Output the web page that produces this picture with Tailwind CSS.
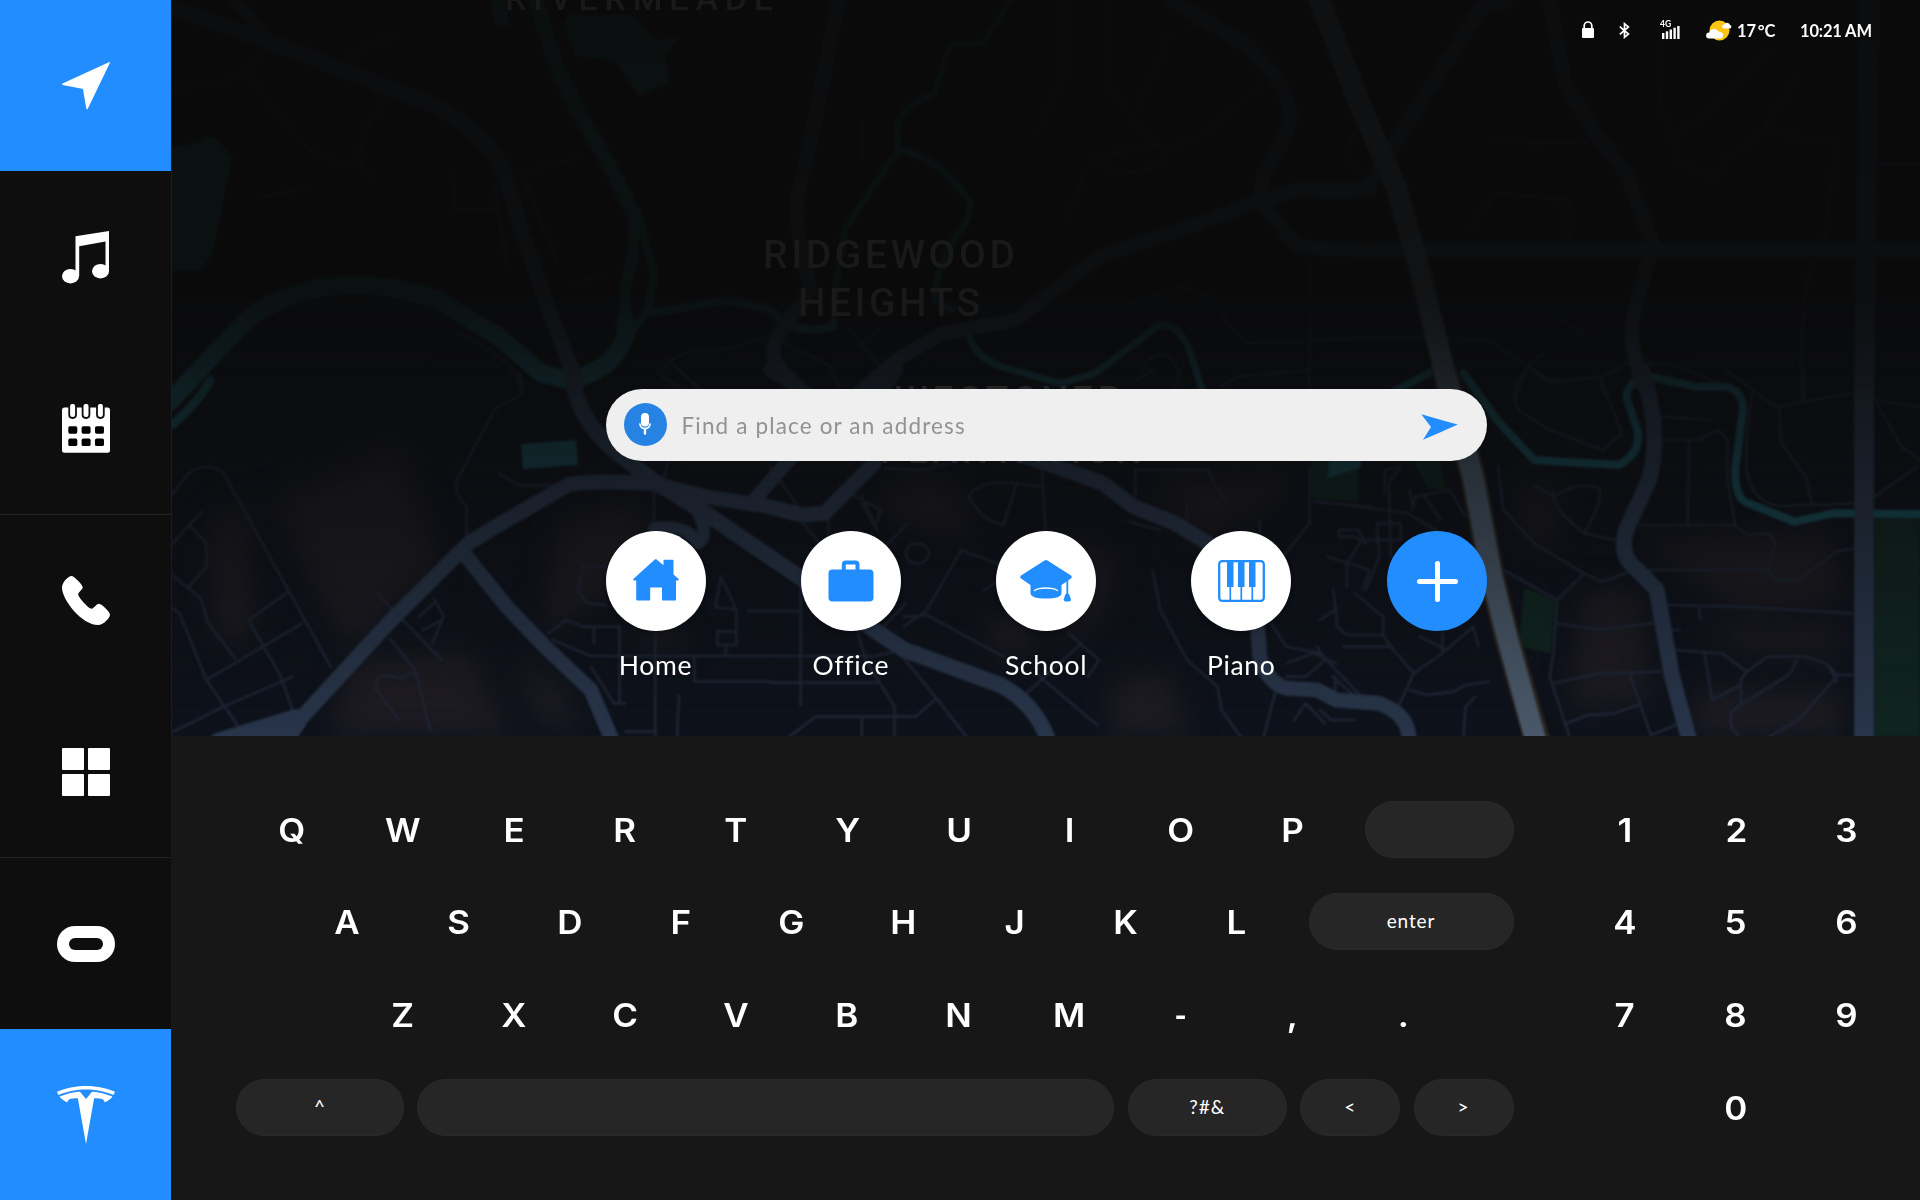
<!DOCTYPE html>
<html lang="en">
<head>
<meta charset="utf-8">
<title>Navigation</title>
<script src="https://cdn.jsdelivr.net/npm/@tailwindcss/browser@4"></script>
</head>
<body class="bg-[#171717] text-white overflow-hidden font-['Lato',sans-serif]">
<div class="flex w-[1920px] h-[1200px] overflow-hidden">

  <!-- Sidebar -->
  <nav class="grid grid-rows-7 w-[171px] h-full shrink-0 bg-[#0e0e0e]">
    <a class="flex items-center justify-center bg-[#228dff]">
      <svg class="w-12 h-12" viewBox="0 0 48 48" fill="#fff" stroke="#fff" stroke-linejoin="round" stroke-width="1.4"><path d="M47.2.8 25 46.6 21.6 26.4.8 22.2Z"/></svg>
    </a>
    <a class="flex items-center justify-center">
      <svg class="w-12 h-[53px]" viewBox="0 0 48 53" fill="#fff"><path d="M13.5 5.2 47 0V40H43.5V10.6L17.2 15.2V45H13.5Z"/><ellipse cx="8.5" cy="45.2" rx="8.5" ry="7.3"/><ellipse cx="38.5" cy="40.2" rx="8.5" ry="7.3"/></svg>
    </a>
    <a class="flex items-center justify-center">
      <svg class="w-12 h-[49px]" viewBox="0 0 48 49"><rect y="3.5" width="48" height="45.3" rx="2.5" fill="#fff"/><g fill="#fff" stroke="#0e0e0e" stroke-width="1.8"><rect x="7.2" y="-1" width="6.8" height="15" rx="3.2"/><rect x="20.6" y="-1" width="6.8" height="15" rx="3.2"/><rect x="35" y="-1" width="6.8" height="15" rx="3.2"/></g><g fill="#000"><rect x="6.3" y="22.3" width="9" height="7.4" rx="1.6"/><rect x="19.6" y="22.3" width="9" height="7.4" rx="1.6"/><rect x="33" y="22.3" width="9" height="7.4" rx="1.6"/><rect x="6.3" y="34.6" width="9" height="7.4" rx="1.6"/><rect x="19.6" y="34.6" width="9" height="7.4" rx="1.6"/><rect x="33" y="34.6" width="9" height="7.4" rx="1.6"/></g></svg>
    </a>
    <a class="flex items-center justify-center border-t border-[#222]">
      <svg class="w-12 h-[49px]" viewBox="0 0 48 49" fill="#fff"><path d="M9.5 0C12 0 20 8 20.7 11.2C21 13.4 16.2 16 16.2 18.4C16.6 21.5 26.4 32.4 29.7 32.7C32 32.5 34.3 27.8 37 27.8C39.6 28 48 35.6 48 38.8C48 41.5 42 49 36 49C20 49 0 24 0 11.5C0 6 6.5 0 9.5 0Z"/></svg>
    </a>
    <a class="flex items-center justify-center pt-px">
      <span class="grid grid-cols-2 gap-1 w-12 h-12"><i class="bg-white rounded-[1px]"></i><i class="bg-white rounded-[1px]"></i><i class="bg-white rounded-[1px]"></i><i class="bg-white rounded-[1px]"></i></span>
    </a>
    <a class="flex items-center justify-center border-t border-[#222] pt-px">
      <svg class="w-[58px] h-9" viewBox="0 0 58 36"><rect width="58" height="36" rx="18" fill="#fff"/><rect x="12" y="12" width="34" height="12" rx="6" fill="#0e0e0e"/></svg>
    </a>
    <a class="flex items-center justify-center bg-[#228dff] pt-0.5">
      <svg class="w-[58px] h-[58px]" viewBox="0 0 24 24" fill="#fff"><path d="M12 5.362l2.475-3.026s4.245.09 8.471 2.054c-1.082 1.636-3.231 2.438-3.231 2.438-.146-1.439-1.154-1.79-4.354-1.79L12 24 8.619 5.034c-3.18 0-4.188.354-4.335 1.792 0 0-2.146-.795-3.229-2.43C5.28 2.431 9.525 2.34 9.525 2.34L12 5.362l-.004.002H12v-.002zm0-3.899c3.415-.03 7.326.528 11.328 2.28.535-.968.672-1.395.672-1.395C19.625.612 15.528.015 12 0 8.472.015 4.375.61 0 2.349c0 0 .195.525.672 1.396C4.674 1.989 8.585 1.435 12 1.46v.003z"/></svg>
    </a>
  </nav>

  <main class="flex flex-col w-[1749px]">
    <!-- Map -->
    <section class="relative h-[736px] overflow-hidden bg-[#0a0a0a] border-l border-[#1c1c1d]">
      <svg class="absolute inset-0 w-[1748px] h-[736px]" viewBox="172 0 1748 736" fill="none">
        <defs>
          <linearGradient id="fade" x1="0" y1="0" x2="0" y2="1">
            <stop offset="0" stop-color="#0a0a0a" stop-opacity=".92"/>
            <stop offset=".4" stop-color="#0a0a0a" stop-opacity=".9"/>
            <stop offset=".46" stop-color="#0a0a0a" stop-opacity=".82"/>
            <stop offset=".55" stop-color="#0a0a0a" stop-opacity=".66"/>
            <stop offset=".72" stop-color="#0a0a0a" stop-opacity=".42"/>
            <stop offset="1" stop-color="#0a0a0a" stop-opacity="0"/>
          </linearGradient>
          <filter id="soft" x="-.02" y="-.02" width="1.04" height="1.04" color-interpolation-filters="sRGB"><feGaussianBlur stdDeviation=".8"/></filter>
          <filter id="patch" x="-.3" y="-.3" width="1.6" height="1.6" color-interpolation-filters="sRGB"><feGaussianBlur stdDeviation="14"/></filter>
          <style>path{vector-effect:non-scaling-stroke}</style>
        </defs>
        <rect x="172" width="1748" height="736" fill="#0e121b"/>
        <!-- built-up areas -->
        <g fill="#1e1c23" filter="url(#patch)">
          <path d="M350 660L470 650L510 736H330Z"/><path d="M210 520L245 500L255 640L215 640Z"/><path d="M275 500L400 440L440 560L350 650L320 600Z"/><path d="M560 520L640 500L650 560L540 640Z"/><path d="M510 660L560 680L580 736L540 720Z"/><path d="M880 480L960 480L970 540L890 520Z"/><path d="M1060 530L1120 560L1100 620L1060 640Z"/><path d="M1110 680L1170 670L1190 736H1110Z"/><path d="M1150 480L1290 470L1280 500L1200 540Z"/><path d="M1580 590L1640 590L1650 700L1570 710Z"/><path d="M1640 540L1830 530L1840 600L1740 610Z"/><path d="M1690 625L1840 625L1840 655L1740 650Z"/><path d="M1690 690H1840V736H1700Z"/><path d="M1520 480L1560 490L1550 550L1520 540Z"/><path d="M980 620L1020 610L1040 650L1000 660Z"/><path d="M630 640L660 600L690 650Z"/>
        </g>
        <g filter="url(#soft)" stroke-linecap="round" stroke-linejoin="round">
          <!-- parks -->
          <g fill="#102521"><path d="M1875 517H1920V736H1875Z"/><path d="M1524 587L1555 600L1551 654L1519 646Z"/><path d="M1311 455H1358V502L1311 498Z"/><path d="M1413 460L1438 455L1446 490L1428 488Z"/></g>
          <!-- lakes -->
          <g fill="#17454f">
            <path d="M521 444L576 440L578 465L523 469Z"/><path d="M1329 455L1362 460L1360 468L1328 478Z"/>
          </g>
          <g fill="#18505c" transform="translate(170 0) scale(.38265 .33333)">
            <path d="M0 440L70 430L95 412L120 415L163 470L110 760L80 810L0 812Z"/><path d="M1040 45L1210 45L1270 125L1335 105L1295 160L1305 250L1225 288L1165 180L1060 168L1030 75Z"/><path d="M838 0L850 70L885 80L880 0Z"/>
          </g>

          <!-- side streets -->
          <g stroke="#1f2636" stroke-width="2.6">
            <g transform="translate(170 0) scale(.38265 .33333)">
              <path d="M0 265Q150 260 190 215L270 120M200 220L330 410Q400 500 500 490Q490 390 560 310M470 160L560 310M470 160L600 100M920 520L1070 470M920 520L1010 780M500 490L530 550M850 550L880 800M740 520V630H860M1040 860L1130 825M750 1000Q900 1070 920 1170M1280 1120Q1320 1040 1440 1050L1568 1010M1280 1120L1340 1170M1305 1080L1380 1165M240 590Q330 570 360 560"/>
            </g>
            <g transform="translate(770 0) scale(.38265 .33333)">
              <path d="M770 0V220L700 400M880 0V250L1000 430Q1050 480 1180 360L1290 250M1000 430L840 480L770 660M1040 110L960 330M1100 80Q1200 60 1270 140M840 480Q950 560 1040 470M240 360V480M20 1020L160 1100L180 1160M200 980L280 1090M240 1030L300 970M970 1110Q1030 1010 1070 1120L1060 1160M1160 890Q1190 980 1250 1030L1568 1015M1410 780V1160M890 930L1080 860L1160 890"/>
            </g>
            <g transform="translate(1320 0) scale(.38265 .33333)">
              <path d="M0 1015H330L440 1020L600 1140L730 1135L800 1090H920L1060 1160M510 1190L550 1090L580 1065M730 1135L745 1190M880 130L890 320L940 490L1030 540L1060 480L1160 390L1340 430M1160 390L1250 230M940 400L1070 280L1170 160M440 410L560 430L700 425M390 690L460 580L560 590L650 600V730M1290 780Q1250 900 1260 1190M1350 430L1310 780M1440 490H1568M70 470Q80 360 160 350M70 470Q90 540 130 520M580 920L690 1000"/>
            </g>
            <g transform="translate(170 370) scale(.38265 .33333)">
              <path d="M0 380L50 310Q100 270 140 310L420 890M0 530L50 465L85 425M50 465L95 520V590L50 650M0 610L80 685L100 760L170 865M0 710L25 730L95 930L185 1080M95 930L345 760M0 1090L140 1010L320 920M310 665L205 750L290 920L320 1020M540 670L710 870M690 685L715 740L685 820M650 740L690 700M660 780L710 750M575 805L640 900L680 1080M640 905L600 925Q530 900 540 960L595 1045"/>
              <path d="M905 0Q940 60 900 85L850 115L750 330Q740 370 775 410V500M860 310L910 345H1000M1300 280L1290 330M1265 360V470M1140 590H1080L1065 660L1090 700L1140 705M990 790L1035 750L1080 770H1175V1000M1108 770V820M1000 810L1100 858H1568M1268 790V1110M1370 860V935H1568M1100 890L1160 1000H1190M1440 620L1425 710L1480 720ZM1480 720V785H1430V825H1480V785M1453 825V858M1510 723H1568M1330 975L1325 1100M1190 1085H1270M1270 0L1320 50M1330 0L1380 50"/>
            </g>
            <g transform="translate(770 370) scale(.38265 .33333)">
              <path d="M0 723H80M80 640V1005M0 858H260M0 938H280M80 450L130 520M150 440L155 500M210 370L290 420L275 470L240 400M240 380L280 480M300 530L360 460M355 550a30 30 0 1 0 60 0a30 30 0 1 0 -60 0M560 660L640 600L500 540L410 720L350 770M350 740L410 735L610 860M280 790L355 700M230 790L250 870L325 1010V1110M50 1100L120 1040H380L435 985L310 810M435 985L520 1110M240 1040V1110M260 860L390 830M780 790L860 870L830 920M815 820L670 970M700 915L855 1065M520 380Q540 330 640 340L710 350M520 380Q550 450 610 465L645 340M710 280L720 480M300 295L400 300L470 280M955 380V300H1145L1160 340L1195 400M1090 400V450M940 455L1020 480M1000 600L1020 720L1090 870L1170 950L1180 1020L1230 1100M1410 300V460L1340 560M1420 395L1568 410M1280 450V490M1310 760L1350 830L1440 850L1470 890M1350 880L1420 850L1480 880M1350 920H1400L1450 870L1430 830M1370 1050L1400 1000L1450 1060M1470 920L1530 980M1290 1100L1320 970M960 30L1000 0M1180 50L1220 20L1410 0M0 290L80 420"/>
            </g>
            <g transform="translate(1320 370) scale(.38265 .33333)">
              <path d="M0 395L230 430L360 520M170 370V300L210 290L180 340L185 560M240 420L250 380L340 360L380 440M275 380L315 450M235 360L240 400M150 520V460H210V510H110L70 580V650M50 480H100L120 520L90 500L50 500ZM20 560L130 600L110 660M150 470L155 560L120 660M35 660L45 770L70 795H165V740L90 670M0 750L45 715M60 830H185L165 795M185 830L245 910L200 1020M245 910L320 850V790M260 800L330 840L400 770M400 770L415 830M235 960L280 975L350 965L380 945L440 935M375 1100L380 1010L405 980M0 850L100 970M40 920V1000M0 1020L30 1050H90"/>
              <path d="M540 0Q490 60 520 120L600 180L740 240L790 190L730 20L600 40L550 0M465 290L480 420L560 520L690 610L735 635L800 610M560 345L610 380Q680 330 730 355Q740 400 690 490Q600 410 610 360M690 490L770 510M480 600L620 690L690 610M620 690L610 850L600 920L655 1110M620 760L730 780L870 760M610 940L730 910L890 905M810 915L865 1095L930 1065M645 1060L700 1035L770 1030L830 1005M835 465H1085L1065 330V210L1040 180L990 210H900M965 210L960 465M1085 470L1120 495L1175 490L1190 520L1170 600L1190 630H1250L1350 545L1395 535M860 600H1175M910 705L1100 710L1395 730M990 710L995 750M925 840L1050 850L1115 905L1100 930V1000M1005 850L1025 990L1100 945M1115 905L1170 860L1250 858Q1330 870 1350 915L1390 915M1245 870L1230 910L1080 1020Q1060 1060 1095 1100M1350 920L1250 1050L1160 1110M1330 890L1350 935M1130 70Q1110 200 1115 300Q1130 400 1200 408L1400 400M1060 0L1190 110L1395 70M1200 110L1205 220L1270 320L1285 400M1265 0V95M1450 90L1568 110M1455 100L1520 230L1568 270M1450 380L1560 290M890 140L1020 150M910 780H940"/>
            </g>
          </g>

          <!-- rivers -->
          <g stroke="#184c58">
            <g transform="translate(170 0) scale(.38265 .33333)">
              <path stroke-width="15" d="M955 0L1010 200L1070 340L1150 500L1215 650"/>
              <path stroke-width="8" d="M1225 640L1245 740L1265 820L1250 930L1190 1020"/>
              <path stroke-width="11" d="M1215 650L1212 760L1190 860L1190 960"/>
              <path stroke-width="18" d="M1190 960V1010Q1150 1120 1040 1140L970 1120L860 1010L700 900C600 860 520 850 440 858Q300 870 200 960L100 1080L0 1205"/>
              <path stroke-width="8" d="M1250 940L1460 900L1568 930L1610 965"/>
              <path stroke-width="9" d="M105 1140Q80 1200 5 1275"/>
            </g>
            <g transform="translate(770 0) scale(.38265 .33333)">
              <path stroke-width="8" d="M0 930L45 975Q110 1000 165 980"/>
              <path stroke-width="6" d="M165 980L175 830L195 690L335 450L332 380Q345 320 430 280"/>
              <path stroke-width="4" d="M430 280L470 135L555 130L630 0"/>
              <path stroke-width="7" d="M335 450Q400 460 470 530L520 600Q535 640 480 720L440 820L430 900L475 930M520 1010Q540 1080 620 1105L760 1150L850 1120L1000 990Q1040 945 1090 1030L1135 1190"/>
            </g>
            <g transform="translate(1320 370) scale(.38265 .33333)" stroke-width="8">
              <path d="M200 60L300 0M375 10L470 160L560 270L780 285Q840 250 830 180L800 80Q805 30 860 20L980 50L1060 50Q1105 60 1105 120L1085 300Q1085 390 1120 400L1240 455L1340 430L1568 432"/>
            </g>
          </g>

          <!-- arterial roads -->
          <g stroke="#28354a">
            <g transform="translate(170 0) scale(.38265 .33333)" stroke-width="15">
              <path d="M0 25L80 55L260 125L520 240L700 320Q850 420 880 540L920 700L1000 960L1065 1150"/>
              <path stroke-width="11" d="M170 0L250 110"/>
            </g>
            <g transform="translate(770 0) scale(.38265 .33333)" stroke-width="14">
              <path d="M180 0L110 400L70 600L75 700L105 870L25 1000Q-10 1060 30 1110L110 1200"/>
              <path d="M1050 0L1250 140Q1360 260 1360 350Q1350 420 1290 520L1280 600L1370 730Q1390 750 1568 750"/>
              <path d="M1568 570L1380 570L1280 600L1100 680L860 770L640 960L450 1000L330 1080L220 1190"/>
            </g>
            <g transform="translate(1320 0) scale(.38265 .33333)" stroke-width="14">
              <path d="M130 750H1568"/>
              <path d="M600 0L640 250L720 400L800 520L870 730L830 900Q800 1000 830 1100L840 1150"/>
              <path d="M490 0L420 25L200 420L150 520Q130 570 70 575L0 575"/>
              <path stroke-width="20" d="M1435 0L1422 1200V2220"/>
            </g>
            <g transform="translate(170 370) scale(.38265 .33333)">
              <path stroke-width="16" d="M1045 0C1060 100 1090 170 1160 240L1260 330L1400 430L1650 625L1840 780L1920 840L2170 945Q2260 1000 2295 1110"/>
              <path stroke-width="15" d="M330 1060L570 760L780 520L850 470L1040 345Q1080 330 1260 340L1400 380L1568 410L1650 435L1710 430L1840 280"/>
              <path stroke-width="22" d="M130 1120L330 1050L290 1120"/>
              <path stroke-width="15" d="M775 560L880 710L980 830L1100 960L1155 1110"/>
              <path stroke-width="12" d="M1265 475Q1350 460 1380 520Q1410 500 1380 430"/>
              <path stroke-width="14" d="M1530 385L1610 280L1680 200"/>
            </g>
            <g transform="translate(770 370) scale(.38265 .33333)">
              <path stroke-width="15" d="M700 270L870 340L950 410L1060 460L1200 560L1270 700L1280 860Q1300 940 1350 955L1430 960L1480 990L1590 1000Q1670 1030 1670 1110"/>
              <path stroke-width="14" d="M330 0L270 90M0 0L60 40M470 190L720 280"/>
            </g>
            <g transform="translate(1320 370) scale(.38265 .33333)">
              <path stroke-width="16" d="M840 0Q895 180 860 330L800 480Q780 560 830 600L880 660L920 920L965 1110"/>
            </g>
          </g>

          <!-- highway -->
          <path stroke="#2b251f" stroke-width="26" d="M1444 370L1473 477L1492 577L1507 637L1537 740"/>
          <path stroke="#4a596a" stroke-width="21" d="M1318 -4L1358 100L1396 187L1419 267L1444 370L1473 477L1492 577L1507 637L1537 745"/>
        </g>
        <rect x="172" width="1748" height="736" fill="url(#fade)"/>
        <!-- district names -->
        <g class="font-['Roboto',sans-serif]" font-size="39" font-weight="500" fill="#19191a">
          <text x="505" y="10" font-size="34" textLength="268">RIVERMEADE</text>
          <text x="763" y="268" textLength="252">RIDGEWOOD</text>
          <text x="798" y="316" textLength="182">HEIGHTS</text>
          <text x="895" y="412" font-size="37" fill="#252526" textLength="226">WESTOVER</text>
          <text x="880" y="463" font-size="37" fill="#252526" textLength="262">PLANTATION</text>
        </g>
      </svg>

      <div class="relative flex flex-col items-center h-full">
        <!-- Status bar -->
        <header class="flex items-center w-full h-[62px] justify-end pr-[49px] text-[17px] font-bold">
          <svg class="w-3 h-[17px] mr-[25px] -mt-1" viewBox="0 0 12 17"><rect y="7" width="12" height="10" rx="1" fill="#fff"/><path d="M2.2 8V4.8a3.8 3.8 0 0 1 7.6 0V8" fill="none" stroke="#fff" stroke-width="1.7"/></svg>
          <svg class="w-[11px] h-[17px] mr-[30px] -mt-0.5" viewBox="0 0 11 17" fill="none" stroke="#fff" stroke-width="1.7"><path d="M.8 4.6 9.4 12 5.500 15.300V1.700L9.400 5 .8 12.400"/></svg>
          <svg class="w-[21px] h-[19px] mr-[25px] -mt-1" viewBox="0 0 21 19" fill="#fff"><text x="0" y="6.500" font-size="8.500" font-weight="700">4G</text><rect x="2" y="13" width="2.400" height="6"/><rect x="5.800" y="11.300" width="2.400" height="7.700"/><rect x="9.600" y="9.500" width="2.400" height="9.500"/><rect x="13.400" y="7.700" width="2.400" height="11.300"/><rect x="17.200" y="6" width="2.400" height="13"/></svg>
          <svg class="w-[26px] h-[21px] mr-[5px] -mt-px" viewBox="0 0 26 21"><circle cx="13.500" cy="10.500" r="10" fill="#ffc414"/><path fill="#fff" d="M3 18.500a3 3 0 0 1 .2-6A5.200 5.200 0 0 1 12.800 11.800A3.400 3.400 0 0 1 14.500 18.500ZM18 8.500a2 2 0 0 1 .3-4A3 3 0 0 1 24 5a1.800 1.800 0 0 1 0 3.500Z"/></svg>
          <span class="w-[38px] whitespace-nowrap text-[16.500px]">17<span class="ml-[1.500px]">°C</span></span>
          <span class="ml-[25px] w-[71px] whitespace-nowrap text-[16.500px] tracking-[-0.15px]">10:21 AM</span>
        </header>

        <!-- Search -->
        <div class="flex items-center mt-[327px] w-[881px] h-[72px] rounded-full bg-[#efefef] pl-[18px] pr-[29px]">
          <span class="flex items-center justify-center w-[43px] h-[43px] -mt-0.5 rounded-full bg-[#2783e3]">
            <svg class="w-3 h-[22px]" viewBox="0 0 12 22" fill="none" stroke="#fff"><rect x="2" y="0" width="8" height="13.500" rx="4" fill="#fff" stroke="none"/><path stroke-width="1.700" stroke-linecap="round" d="M.9 11Q1.500 15.500 6 15.500T11.100 11"/><path stroke-width="2.400" stroke-linecap="round" d="M6 16V20.500"/></svg>
          </span>
          <span class="ml-[15px] mt-0.5 text-[22.500px] tracking-[1.150px] text-[#929292] whitespace-nowrap">Find a place or an address</span>
          <svg class="w-[37px] h-[26px] ml-auto mt-[3px]" viewBox="0 0 37 26" fill="#228dff"><path d="M.3.300 36.800 10.600 2 25.800 10 13Z"/></svg>
        </div>

        <!-- Shortcuts -->
        <div class="flex justify-between w-[881px] mt-[70px] text-[26.500px] tracking-[0.700px]">
          <div class="flex flex-col items-center w-[100px]">
            <span class="flex items-center justify-center w-[100px] h-[100px] rounded-full bg-white shadow-md">
              <svg class="w-[46px] h-[42px] -mt-0.5" viewBox="0 0 46 42" fill="#228dff"><path d="M23 0 30.500 6.200V1.500Q30.500.7 31.300.7H39.700Q40.500.7 40.500 1.500V15.500L45.700 20Q46 21.500 44.500 21.500H43V40.500Q43 41.500 42 41.500H30Q29 41.500 29 40.500V28.500H17.200V40.500Q17.200 41.500 16.200 41.500H4.200Q3.200 41.500 3.200 40.500V21.500H1.200Q-.3 21.300.3 20L21.500.8Z"/></svg>
            </span>
            <span class="mt-[18px] leading-8">Home</span>
          </div>
          <div class="flex flex-col items-center w-[100px]">
            <span class="flex items-center justify-center w-[100px] h-[100px] rounded-full bg-white shadow-md">
              <svg class="w-[46px] h-[42px]" viewBox="0 0 46 42" fill="#228dff"><rect x=".5" y="9.500" width="45" height="32" rx="4"/><path d="M15.800 11V4.500Q15.800 2.500 17.800 2.500H27.500Q29.500 2.500 29.500 4.500V11" fill="none" stroke="#228dff" stroke-width="4"/></svg>
            </span>
            <span class="mt-[18px] leading-8">Office</span>
          </div>
          <div class="flex flex-col items-center w-[100px]">
            <span class="flex items-center justify-center w-[100px] h-[100px] rounded-full bg-white shadow-md">
              <svg class="w-[52px] h-[42px]" viewBox="0 0 52 42" fill="#228dff"><path d="M24.500.5Q26 -.4 27.500.5L51 15.500Q52.500 17 51 18.500L41.500 25V33Q41.500 38.500 26 38.500T10.500 33V25L1 18.500Q-.5 17 1 15.500Z"/><path d="M14.500 30.500Q18 28 26 28T37.500 30.500" fill="none" stroke="#fff" stroke-width="1.300" stroke-linecap="round"/><path d="M47.300 18V34" stroke="#228dff" stroke-width="1.800"/><path d="M45.300 34.500Q47.300 32.500 49.300 34.500L51 39.500Q51 41.500 49 41.500H45.700Q43.700 41.500 43.700 39.500Z"/></svg>
            </span>
            <span class="mt-[18px] leading-8">School</span>
          </div>
          <div class="flex flex-col items-center w-[100px]">
            <span class="flex items-center justify-center w-[100px] h-[100px] rounded-full bg-white shadow-md">
              <svg class="w-[47px] h-[42px]" viewBox="0 0 47 42" fill="#228dff"><rect x="1.200" y="1.200" width="44.600" height="39.600" rx="3" fill="none" stroke="#228dff" stroke-width="2.300"/><rect x="9" y="2" width="6.500" height="25"/><rect x="20" y="2" width="6.500" height="25"/><rect x="31" y="2" width="6.500" height="25"/><path d="M12.300 26V40M23.300 26V40M34.300 26V40" stroke="#228dff" stroke-width="1.700"/></svg>
            </span>
            <span class="mt-[18px] leading-8">Piano</span>
          </div>
          <div class="flex flex-col items-center w-[100px]">
            <span class="flex items-center justify-center w-[100px] h-[100px] rounded-full bg-[#228dff]">
              <svg class="w-[41px] h-[41px] mt-px ml-px" viewBox="0 0 41 41" stroke="#fff" stroke-width="5" stroke-linecap="round"><path d="M20.500 2.500V38.500M2.500 20.500H38.500"/></svg>
            </span>
          </div>
        </div>
      </div>
    </section>

    <!-- Keyboard -->
    <section class="flex flex-1 pt-[64.500px] pl-[65px] bg-[#171717] font-['Inter',sans-serif]">
      <div class="flex flex-col w-[1277.500px] gap-[35.700px]" id="keys"></div>
      <div class="grid grid-cols-[repeat(3,111.200px)] auto-rows-[57px] gap-y-[35.700px] ml-[55.500px]" id="pad"></div>
    </section>
  </main>
</div>

<script>
  const key = c => `<span class="flex items-center justify-center w-[111.200px] h-[57px] pt-[3px] text-[33px] font-semibold shrink-0"><span class="${c === '-' ? 'scale-x-[0.8]' : 'scale-x-[1.06]'}">${c}</span></span>`;
  const pill = (label, cls) => `<span class="flex items-center justify-center h-[57px] rounded-full bg-[#262626] border border-[#2a2a2a] text-[19px] font-normal font-['Lato',sans-serif] tracking-[0.900px] ${cls}">${label}</span>`;
  const row = (cls, html) => `<div class="flex h-[57px] ${cls}">${html}</div>`;
  document.getElementById('keys').innerHTML =
    row('', [...'QWERTYUIOP'].map(key).join('') + pill('', 'w-[149px] ml-auto')) +
    row('pl-[55.500px]', [...'ASDFGHJKL'].map(key).join('') + pill('enter', 'w-[205px] ml-auto')) +
    row('pl-[111px]', [...'ZXCVBNM-,.'].map(key).join('')) +
    row('justify-between', pill('^', 'w-[168px]') + pill('', 'w-[697px]') + pill('?#&amp;', 'w-[159px]') + pill('&lt;', 'w-[100px]') + pill('&gt;', 'w-[100px]'));
  document.getElementById('pad').innerHTML = [...'123456789'].map(key).join('') + '<span></span>' + key('0');
</script>
</body>
</html>
